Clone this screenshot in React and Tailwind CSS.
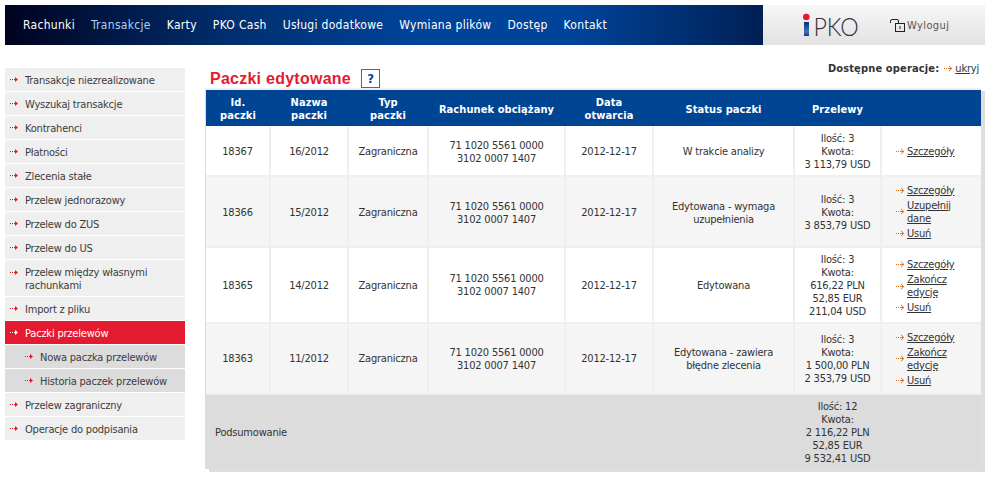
const font = "font-['DejaVu_Sans_Condensed','DejaVu_Sans',sans-serif] font-stretch-condensed";

const navItems = ['Rachunki', 'Transakcje', 'Karty', 'PKO Cash', 'Usługi dodatkowe', 'Wymiana plików', 'Dostęp', 'Kontakt'];

const sideItems = [
  { label: 'Transakcje niezrealizowane' },
  { label: 'Wyszukaj transakcje' },
  { label: 'Kontrahenci' },
  { label: 'Płatności' },
  { label: 'Zlecenia stałe' },
  { label: 'Przelew jednorazowy' },
  { label: 'Przelew do ZUS' },
  { label: 'Przelew do US' },
  { label: 'Przelew między własnymi rachunkami', tall: true },
  { label: 'Import z pliku' },
  { label: 'Paczki przelewów', active: true },
  { label: 'Nowa paczka przelewów', sub: true },
  { label: 'Historia paczek przelewów', sub: true },
  { label: 'Przelew zagraniczny' },
  { label: 'Operacje do podpisania' },
];

const rows = [
  {
    id: '18367', name: '16/2012', status: ['W trakcie analizy'], h: 'h-[50px]', pad: 'pt-[2px]', actionPad: 'pt-[2px]',
    sum: ['Ilość: 3', 'Kwota:', '3 113,79 USD'],
    actions: [['Szczegóły']],
  },
  {
    id: '18366', name: '15/2012', status: ['Edytowana - wymaga', 'uzupełnienia'], h: 'h-[71px]', pad: 'pt-[2px]', actionPad: 'pt-0', alt: true,
    sum: ['Ilość: 3', 'Kwota:', '3 853,79 USD'],
    actions: [['Szczegóły'], ['Uzupełnij', 'dane'], ['Usuń']],
  },
  {
    id: '18365', name: '14/2012', status: ['Edytowana'], h: 'h-[76px]', pad: 'pt-0', actionPad: 'pt-[2px]',
    sum: ['Ilość: 3', 'Kwota:', '616,22 PLN', '52,85 EUR', '211,04 USD'],
    actions: [['Szczegóły'], ['Zakończ', 'edycję'], ['Usuń']],
  },
  {
    id: '18363', name: '11/2012', status: ['Edytowana - zawiera', 'błędne zlecenia'], h: 'h-[71px]', pad: 'pt-0', actionPad: 'pt-0', alt: true,
    sum: ['Ilość: 3', 'Kwota:', '1 500,00 PLN', '2 353,79 USD'],
    actions: [['Szczegóły'], ['Zakończ', 'edycję'], ['Usuń']],
  },
];

// solid head, used in the side menu
function Arrow({ className }) {
  return (
    <svg width="8" height="5" viewBox="0 0 8 5" className={className} fill="currentColor">
      <rect x="0" y="2" width="1" height="1" />
      <rect x="2" y="2" width="1" height="1" />
      <rect x="4" y="2" width="1" height="1" />
      <path d="M5 0 L8 2.5 L5 5 Z" />
    </svg>
  );
}

// open head, used next to links
function LinkArrow({ className }) {
  return (
    <svg width="9" height="7" viewBox="0 0 9 7" className={className} fill="none" stroke="#dd6f1c">
      <path d="M0 3.5 H1 M2 3.5 H3 M4 3.5 H7.5" />
      <path d="M5 0.8 L7.8 3.5 L5 6.2" />
    </svg>
  );
}

function Lines({ lines }) {
  return lines.map((line) => <div key={line}>{line}</div>);
}

function SideItem({ item }) {
  let color = 'bg-[#efefef] text-[#3c3c3c]';
  if (item.active) color = 'bg-[#e41b30] text-white';
  if (item.sub) color = 'bg-[#dcdcdc] text-[#3c3c3c]';
  return (
    <div className={`flex ${item.tall ? 'h-[36px] items-start pt-[4px]' : 'h-[23px] items-center'} ${item.sub ? 'pl-[20px]' : 'pl-[5px]'} ${color}`}>
      <Arrow className={`mr-[7px] shrink-0 ${item.tall ? 'mt-[6px]' : ''} ${item.active ? 'text-white' : 'text-[#e41b30]'}`} />
      <span className="pt-[2px] leading-[13px]">{item.label}</span>
    </div>
  );
}

function Action({ lines }) {
  return (
    <div className="flex items-center text-left">
      <LinkArrow className="mr-[2px] shrink-0" />
      <a className="block text-[#333] underline">
        <Lines lines={lines} />
      </a>
    </div>
  );
}

const th = 'bg-[#004494] border-0 pt-[2px] text-center align-middle font-bold tracking-[0.08px] text-white text-[11px] leading-[13px]';
const td = 'border-r-2 border-[#efefef] text-center align-middle last:border-r-0';

export default function App() {
  return (
    <div className={`${font} relative h-[478px] w-[998px] overflow-hidden bg-white pt-[5px] pl-[5px] text-[11px] leading-[13px] tracking-[-0.2px] text-[#333]`}>
      <header className="flex h-[40px] w-[980px]">
        <nav className="flex h-full w-[758px] items-center gap-[16px] bg-[linear-gradient(90deg,#00031f_0%,#002f70_30%,#00449a_55%,#00449a_75%,#001f55_100%)] pl-[18px] text-[12px] tracking-[0.3px] text-white">
          {navItems.map((item) => (
            <span key={item} className={item === 'Transakcje' ? 'text-[#a9d2f5]' : ''}>{item}</span>
          ))}
        </nav>
        <div className="flex h-full w-[222px] items-center bg-[linear-gradient(180deg,#f6f6f6,#e2e2e2)] pl-[40px]">
          <svg width="60" height="40" viewBox="0 0 60 40" className="shrink-0">
            <defs>
              <linearGradient id="ipko-i" x1="0" y1="0" x2="0" y2="1">
                <stop offset="0" stopColor="#0a2d6c" />
                <stop offset="0.7" stopColor="#3f78bd" />
                <stop offset="1" stopColor="#16386f" />
              </linearGradient>
            </defs>
            <circle cx="3.3" cy="12" r="3.3" fill="#e41b30" />
            <rect x="1" y="17" width="5" height="14" fill="url(#ipko-i)" />
            <text x="10.5" y="31" fontSize="26" fontFamily="Lato, sans-serif" fontWeight="300" fill="#333" textLength="45" lengthAdjust="spacingAndGlyphs">PKO</text>
          </svg>
          <svg width="15" height="13" viewBox="0 0 15 13" fill="none" stroke="#222" strokeWidth="1" className="ml-[27px] mr-[2px] shrink-0">
            <path d="M0.5 4 V2 Q0.5 0.5 2 0.5 H7 Q8.5 0.5 8.5 2 V4.5" />
            <rect x="5.5" y="4.5" width="9" height="8" strokeWidth="1" />
            <rect x="9.5" y="7" width="1" height="3" fill="#222" stroke="none" />
          </svg>
          <span className="tracking-[0.4px] text-[#555]">Wyloguj</span>
        </div>
      </header>

      <div className="mt-[23px] flex">
        <aside className="flex w-[180px] shrink-0 flex-col gap-px">
          {sideItems.map((item) => <SideItem key={item.label} item={item} />)}
        </aside>

        <main className="ml-[20px] w-[780px]">
          <div className="flex h-[20px] items-start">
            <h1 className="ml-[5px] mt-[1px] font-['Liberation_Sans',sans-serif] text-[16px] leading-[19px] font-bold tracking-[0.25px] text-[#e41b30] [font-stretch:normal]">Paczki edytowane</h1>
            <span className="ml-[10px] mt-[1px] flex h-[19px] w-[19px] items-center justify-center border border-[#3a6ba5] text-[13px] font-bold text-[#004494]">?</span>
            <div className="ml-auto mr-[6px] mt-[-6px] flex items-center">
              <b className="mr-[5px] tracking-[0.15px] text-[#333]">Dostępne operacje:</b>
              <LinkArrow className="mr-[2px]" />
              <a className="text-[#333] underline">ukryj</a>
            </div>
          </div>

          <div className="w-[776px] border-t-2 border-l border-t-[#efefef] border-l-[#dedede] bg-white shadow-[4px_3px_0_#dedede]">
            <table className="w-[775px] table-fixed border-collapse">
              <colgroup>
                <col className="w-[64px]" />
                <col className="w-[78px]" />
                <col className="w-[80px]" />
                <col className="w-[137px]" />
                <col className="w-[88px]" />
                <col className="w-[141px]" />
                <col className="w-[87px]" />
                <col />
              </colgroup>
              <thead>
                <tr className="h-[36px]">
                  <th className={th}>Id.<br />paczki</th>
                  <th className={th}>Nazwa<br />paczki</th>
                  <th className={th}>Typ<br />paczki</th>
                  <th className={th}>Rachunek obciążany</th>
                  <th className={th}>Data<br />otwarcia</th>
                  <th className={th}>Status paczki</th>
                  <th className={th}>Przelewy</th>
                  <th className={th}></th>
                </tr>
              </thead>
              <tbody>
                {rows.map((row) => (
                  <tr key={row.id} className={`${row.h} border-b-2 border-[#efefef] ${row.alt ? 'bg-[#f5f5f5]' : 'bg-white'}`}>
                    <td className={`${td} ${row.pad}`}>{row.id}</td>
                    <td className={`${td} ${row.pad}`}>{row.name}</td>
                    <td className={`${td} ${row.pad}`}>Zagraniczna</td>
                    <td className={`${td} ${row.pad}`}>71 1020 5561 0000<br />3102 0007 1407</td>
                    <td className={`${td} ${row.pad}`}>2012-12-17</td>
                    <td className={`${td} ${row.pad}`}><Lines lines={row.status} /></td>
                    <td className={`${td} ${row.pad}`}><Lines lines={row.sum} /></td>
                    <td className={`${td} ${row.actionPad}`}>
                      <div className="flex flex-col gap-[2px] pl-[14px]">
                        {row.actions.map((action) => <Action key={action[0]} lines={action} />)}
                      </div>
                    </td>
                  </tr>
                ))}
                <tr className="h-[75px] bg-[#dcdcdc]">
                  <td colSpan={6} className="pl-[9px] text-left align-middle">Podsumowanie</td>
                  <td className="text-center align-middle">
                    <Lines lines={['Ilość: 12', 'Kwota:', '2 116,22 PLN', '52,85 EUR', '9 532,41 USD']} />
                  </td>
                  <td></td>
                </tr>
              </tbody>
            </table>
          </div>
        </main>
      </div>
    </div>
  );
}
